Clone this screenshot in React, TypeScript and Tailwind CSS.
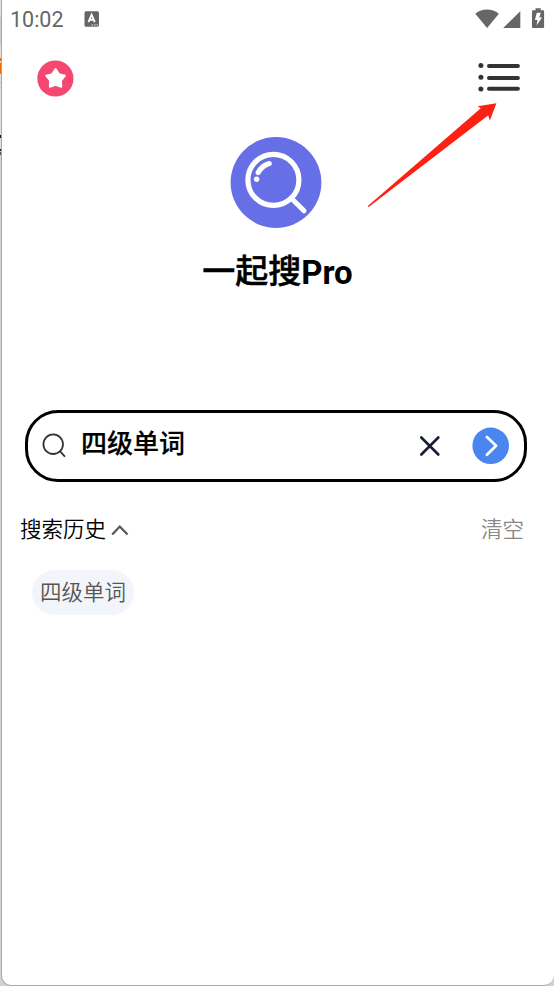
const SANS = "font-[Roboto,'Noto_Sans_CJK_SC',sans-serif]";

// Narrow strip of the window that sits behind the phone screen.
function BackgroundStrip() {
  return (
    <div className="flex h-full w-px shrink-0 flex-col bg-[#d2d2d2]">
      <div className="h-[17px] bg-[#e0e0e0]" />
      <div className="h-[28px] bg-[#cdcdcd]" />
      <div className="h-[13px] bg-[#dfdfdf]" />
      <div className="-mr-px h-[3px] bg-[#ec6a00]" />
      <div className="-mr-px h-[2px] bg-[#ead8c8]" />
      <div className="-mr-px h-[11px] bg-[#ec6a00]" />
      <div className="h-[8px] bg-[#dfdfdf]" />
      <div className="h-px bg-[#bcbcbc]" />
      <div className="h-[52px] bg-[#dedede]" />
      <div className="-mr-px h-[3px] bg-[#15151f]" />
      <div className="h-[11px] bg-[#dedede]" />
      <div className="-mr-px h-[2px] bg-[#15151f]" />
      <div className="h-px bg-[#dedede]" />
      <div className="h-[3px] bg-[#555]" />
    </div>
  );
}

function StatusBar() {
  return (
    <header className="flex h-[38px] shrink-0 items-center pl-[8px] pr-[9px] text-[#666]">
      <span className="w-[74px] pt-[2px] text-[21.5px] leading-[38px]">10:02</span>
      <svg className="h-4 w-4" viewBox="0 0 16 16">
        <rect x="0.5" y="0.3" width="14.5" height="15.5" rx="1.5" fill="#666" />
        <path d="M4.4 11.2 7.6 3.8l3.2 7.4M5.6 8.8h4" fill="none" stroke="#fff" strokeWidth="1.8" />
        <path d="M7.5 14h1.4M10.2 14h1.4M12.7 14h1.4" stroke="#fff" strokeWidth="1.1" />
      </svg>
      <svg className="ml-auto h-[22px] w-[70px]" viewBox="0 0 70 22" fill="#666">
        <path d="M0.3 5.8C7.3 0.2 16.7 0.2 23.9 5.8L12.1 20Z" />
        <path d="M45.3 3.2V20H28.2Z" />
        <path d="M60.5 0.3h5.2v1.9h2.1c.8 0 1.3.5 1.3 1.3v15.2c0 .8-.5 1.3-1.3 1.3h-9.5c-.8 0-1.3-.5-1.3-1.3V3.5c0-.8.5-1.3 1.3-1.3h2.2Z" />
        <path d="M61.8 4.8h4l-1.5 4.6h2.8l-5.6 8.2 1-5.7h-2.6Z" fill="#fff" />
      </svg>
    </header>
  );
}

function Toolbar() {
  return (
    <div className="flex h-[82px] shrink-0 justify-between pl-[35px] pr-[33px]">
      <button className="mt-[22px] h-[37px] w-[37px]" aria-label="收藏">
        <svg viewBox="0 0 37 37">
          <circle cx="18.4" cy="18.5" r="18.1" fill="#f44771" />
          <path d="m18.6 9 3.3 5.1 6 1.5-3.9 5 .3 6.2-5.7-1.9-5.7 1.9.3-6.2-3.9-5 6-1.5Z" fill="#fff" stroke="#fff" strokeWidth="2" strokeLinejoin="round" />
        </svg>
      </button>
      <button className="mt-[24px] h-[30px] w-[43px]" aria-label="菜单">
        <svg viewBox="0 0 43 30" stroke="#333" strokeLinecap="round" strokeWidth="4">
          <path d="M11 4h28.9M11 16h28.9M11 26.8h28.9" />
          <g fill="#333" stroke="none">
            <circle cx="2.9" cy="3.6" r="2.5" />
            <circle cx="2.9" cy="15.3" r="2.5" />
            <circle cx="2.9" cy="27" r="2.5" />
          </g>
        </svg>
      </button>
    </div>
  );
}

function Brand() {
  return (
    <div className="flex h-[290px] shrink-0 flex-col items-center pt-[16px]">
      <svg className="mr-[4px] h-[92px] w-[92px]" viewBox="0 0 92 92" fill="none" stroke="#fff">
        <circle cx="46" cy="46.5" r="45.4" fill="#666fe6" stroke="none" />
        <circle cx="43.4" cy="43.9" r="25.5" strokeWidth="5.2" />
        <path d="m62 63 12 11.8" strokeWidth="5" strokeLinecap="round" />
        <path d="M28.2 36.6q3.7-6.8 11-9" strokeWidth="5.2" strokeLinecap="round" />
        <circle cx="26.6" cy="43.2" r="2.7" fill="#fff" stroke="none" />
      </svg>
      <h1 className="mr-px mt-[19px] flex h-[50px] items-center whitespace-nowrap text-[33px] leading-[50px] text-black">
        <span className="font-medium [-webkit-text-stroke:0.5px_black]">一起搜</span>
        <span className="pt-px font-bold">Pro</span>
      </h1>
    </div>
  );
}

function SearchBox() {
  return (
    <div className="ml-[23px] mr-[27px] flex h-[72px] shrink-0 items-center rounded-[33px] border-[3px] border-black pl-[13px] pr-[14px]">
      <svg className="h-[26px] w-[26px]" viewBox="0 0 26 26" fill="none" stroke="#333" strokeWidth="1.8" strokeLinecap="round">
        <circle cx="12.2" cy="11.2" r="9.8" />
        <path d="m19.1 18.4 4.4 4.7" />
      </svg>
      <span className="mb-[5px] ml-[14px] text-[26px] font-medium leading-[38px] text-black [-webkit-text-stroke:0.2px_black]">四级单词</span>
      <svg className="ml-auto h-[22px] w-[22px]" viewBox="0 0 22 22" stroke="#151d36" strokeWidth="2.6" strokeLinecap="round">
        <path d="m2.3 2.5 17 17M19.3 2.5 2.3 19.5" />
      </svg>
      <svg className="ml-[31px] h-[38px] w-[38px]" viewBox="0 0 38 38">
        <circle cx="18.7" cy="18.8" r="18.3" fill="#4b86f0" />
        <path d="m14.9 10 9.2 8.8-9.2 9" fill="none" stroke="#fff" strokeWidth="2.7" strokeLinecap="round" strokeLinejoin="round" />
      </svg>
    </div>
  );
}

function History() {
  return (
    <section className="pt-[28px] font-[350]">
      <div className="flex h-[40px] items-center pl-[18px] pr-[30px] text-[21.5px] leading-[40px]">
        <span className="text-black">搜索历史</span>
        <svg className="ml-[4px] h-4 w-[20px]" viewBox="0 0 20 16" fill="none" stroke="#555" strokeWidth="2.2">
          <path d="m2.2 12.5 7.6-8 7.7 8" />
        </svg>
        <span className="ml-auto text-[#888]">清空</span>
      </div>
      <div className="mt-[20px] pl-[30px]">
        <span className="flex h-[45px] w-[102px] items-center justify-center rounded-full bg-[#f2f5fa] pt-px text-[21.5px] leading-[44px] text-[#555]">四级单词</span>
      </div>
    </section>
  );
}

// Red pointer laid over the page, aimed at the menu button.
function Pointer() {
  return (
    <svg className="pointer-events-none absolute left-[367px] top-[102px] h-[106px] w-[131px]" viewBox="0 0 131 106">
      <path d="M.8 104 113.8 6.3 110.6 4.3 129.4 1.2 122.8 18.8 121.3 13.2 1.7 105Z" fill="#ff2014" />
    </svg>
  );
}

export default function App() {
  return (
    <div className={`relative flex h-[986px] w-[554px] overflow-hidden bg-[#d2d2d2] ${SANS}`}>
      <BackgroundStrip />
      <main className="flex h-[986px] flex-1 flex-col rounded-b-[10px] border-b border-l border-[#a8a8a8] bg-white">
        <StatusBar />
        <Toolbar />
        <Brand />
        <SearchBox />
        <History />
      </main>
      <Pointer />
    </div>
  );
}
